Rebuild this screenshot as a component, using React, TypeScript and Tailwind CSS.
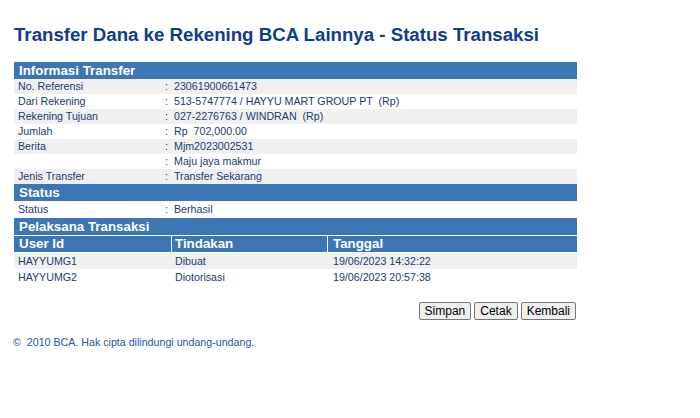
import React from "react";

const info: [string, string, boolean][] = [
  ["No. Referensi", "23061900661473", true],
  ["Dari Rekening", "513-5747774 / HAYYU MART GROUP PT  (Rp)", false],
  ["Rekening Tujuan", "027-2276763 / WINDRAN  (Rp)", true],
  ["Jumlah", "Rp  702,000.00", false],
  ["Berita", "Mjm2023002531", true],
  ["", "Maju jaya makmur", false],
  ["Jenis Transfer", "Transfer Sekarang", true],
];

function Row({ label, value, gray, h }: { label: string; value: string; gray: boolean; h: string }) {
  return (
    <div className={`flex items-center ${h} ${gray ? "bg-[#f0f0f0]" : "bg-white"}`}>
      <div className="w-[151px] pl-[4px]">{label}</div>
      <div className="w-[9px]">:</div>
      <div className="whitespace-pre">{value}</div>
    </div>
  );
}

function Band({ text }: { text: string }) {
  return (
    <div className="h-[17px] bg-[#3d76b4] text-white font-bold text-[13.33px] leading-[17px] pl-[5px]">{text}</div>
  );
}

export default function App() {
  return (
    <div className="w-[700px] h-[418px] bg-white text-[10.67px] leading-[15px] text-[#1c3a70]" style={{ fontFamily: '"Liberation Sans", Arial, sans-serif' }}>
      <div className="pl-[14px] pt-[23px]">
        <h1 className="text-[18.67px] leading-[24px] font-bold text-[#0e3d8a]">Transfer Dana ke Rekening BCA Lainnya - Status Transaksi</h1>
        <div className="w-[563px] mt-[15px]">
          <Band text="Informasi Transfer" />
          {info.map(([l, v, g], i) => (
            <Row key={i} label={l} value={v} gray={g} h="h-[15px]" />
          ))}
          <Band text="Status" />
          <Row label="Status" value="Berhasil" gray={false} h="h-[17px]" />
          <Band text="Pelaksana Transaksi" />
          <div className="grid grid-cols-[157px_155px_1fr] gap-x-[1px] mt-[1px] h-[16px] bg-white">
            <div className="bg-[#3d76b4] text-white font-bold text-[13.33px] leading-[16px] pl-[5px]">User Id</div>
            <div className="bg-[#3d76b4] text-white font-bold text-[13.33px] leading-[16px] pl-[3px]">Tindakan</div>
            <div className="bg-[#3d76b4] text-white font-bold text-[13.33px] leading-[16px] pl-[5px]">Tanggal</div>
          </div>
          {[
            ["HAYYUMG1", "Dibuat", "19/06/2023 14:32:22", true],
            ["HAYYUMG2", "Diotorisasi", "19/06/2023 20:57:38", false],
          ].map(([u, t, d, g], i) => (
            <div key={i} className={`grid grid-cols-[157px_155px_1fr] gap-x-[1px] h-[16px] items-center ${g ? "bg-[#f0f0f0]" : "bg-white"} ${i === 0 ? "mt-[1px]" : ""}`}>
              <div className="pl-[4px]">{u as string}</div>
              <div className="pl-[3px]">{t as string}</div>
              <div className="pl-[5px]">{d as string}</div>
            </div>
          ))}
          <div className="flex justify-end gap-[3px] mt-[17px] pr-[1px]">
            {["Simpan", "Cetak", "Kembali"].map((b) => (
              <button key={b} className="h-[18px] px-[5px] text-[12px] leading-[16px] text-black bg-[#efefef] border border-[#767676] rounded-[2px]">{b}</button>
            ))}
          </div>
        </div>
        <div className="mt-[15px] -ml-[1px] text-[10.67px] text-[#2a52a3]">©&nbsp; 2010 BCA. Hak cipta dilindungi undang-undang.</div>
      </div>
    </div>
  );
}
